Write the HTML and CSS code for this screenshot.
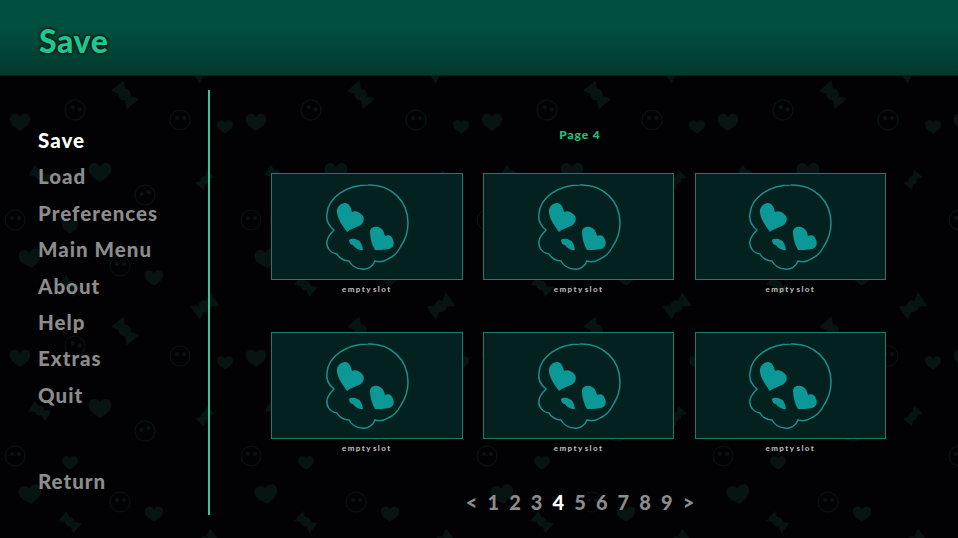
FILE: index.html
```html
<!DOCTYPE html>
<html>
<head>
    <title>Save</title>
    <link rel="stylesheet" href="styles.css">
</head>
<body>
    <svg class="defs" width="0" height="0">
        <defs>
            <symbol id="skull" viewBox="0 0 96 96">
                <path class="skull-line" d="M48 6 C71 5 88 22 88 44 C88 54 85 61 81 67 C78 73 73 78 68 80 C64 83 59 83 55 82 C53 88 47 91 42 90 C36 90 31 86 29 82 C24 82 19 79 17 75 C10 74 6 68 7 62 C8 57 11 54 14 51 C9 47 6 41 7 35 C8 18 27 6 48 6 Z"/>
                <path class="skull-fill" d="M17 34 C16 28 21 24 25 24 C29 24 31 28 32 33 C35 31 40 33 43 37 C45 41 43 45 39 47 C35 49 30 50 27 53 C23 47 18 41 17 34 Z"/>
                <path class="skull-fill" d="M50 53 C50 48 55 47 58 48 C62 49 64 52 65 57 C69 55 72 57 73 61 C75 65 73 69 69 70 C64 71 59 71 55 71 C52 66 50 59 50 53 Z"/>
                <path class="skull-fill" d="M29 61 C32 59 36 60 37 61 C40 61 42 65 43 71 C39 72 34 68 33 66 C31 66 29 64 29 61 Z"/>
            </symbol>
            <g id="heart"><path d="M0 -3 C-3 -10 -13 -7 -11 1 C-10 6 -4 9 0 12 C4 9 10 6 11 1 C13 -7 3 -10 0 -3 Z"/></g>
            <g id="candy"><path d="M-5 -4 A6 6 0 1 1 -5 4 L-12 8 L-12 -8 Z M5 -4 L12 -8 L12 8 L5 4 Z"/></g>
            <g id="face"><circle class="bg-line" r="10"/><circle cx="-3" cy="-2" r="2"/><circle cx="4" cy="-2" r="2"/></g>
            <pattern id="tile" class="tile" width="236" height="236" patternUnits="userSpaceOnUse">
                <use href="#heart" transform="translate(30 20) rotate(-10)"/>
                <use href="#candy" transform="translate(70 50) rotate(40) scale(.8)"/>
                <use href="#face" transform="translate(120 30)"/>
                <use href="#heart" transform="translate(154 40) scale(.8)"/>
                <use href="#candy" transform="translate(205 70) rotate(-35)"/>
                <use href="#heart" transform="translate(20 120) scale(.9)"/>
                <use href="#face" transform="translate(75 110) rotate(20)"/>
                <use href="#candy" transform="translate(125 95) rotate(50)"/>
                <use href="#face" transform="translate(180 120)"/>
                <use href="#heart" transform="translate(225 125) scale(.7)"/>
                <use href="#candy" transform="translate(40 175) rotate(30) scale(.8)"/>
                <use href="#heart" transform="translate(100 170)"/>
                <use href="#face" transform="translate(145 195) rotate(-15)"/>
                <use href="#candy" transform="translate(205 180) rotate(-50) scale(.7)"/>
                <use href="#face" transform="translate(15 220)"/>
                <use href="#heart" transform="translate(70 225) scale(.7)"/>
            </pattern>
        </defs>
    </svg>
    <svg class="backdrop" width="958" height="538"><rect width="958" height="538" fill="url(#tile)"/></svg>

    <header class="title-bar">
        <h1>Save</h1>
    </header>

    <div class="screen">
        <nav class="side-nav">
            <div class="nav-items">
                <a class="active">Save</a>
                <a>Load</a>
                <a>Preferences</a>
                <a>Main Menu</a>
                <a>About</a>
                <a>Help</a>
                <a>Extras</a>
                <a>Quit</a>
            </div>
            <a class="return-link">Return</a>
        </nav>

        <main class="save-area">
            <div class="page-name">Page 4</div>
            <div class="slots">
                <div class="slot"><div class="slot-pic"><svg><use href="#skull"/></svg></div><div class="slot-name">empty slot</div></div>
                <div class="slot"><div class="slot-pic"><svg><use href="#skull"/></svg></div><div class="slot-name">empty slot</div></div>
                <div class="slot"><div class="slot-pic"><svg><use href="#skull"/></svg></div><div class="slot-name">empty slot</div></div>
                <div class="slot"><div class="slot-pic"><svg><use href="#skull"/></svg></div><div class="slot-name">empty slot</div></div>
                <div class="slot"><div class="slot-pic"><svg><use href="#skull"/></svg></div><div class="slot-name">empty slot</div></div>
                <div class="slot"><div class="slot-pic"><svg><use href="#skull"/></svg></div><div class="slot-name">empty slot</div></div>
            </div>
            <div class="pager">
                <span>&lt;</span><span>1</span><span>2</span><span>3</span><span class="current">4</span><span>5</span><span>6</span><span>7</span><span>8</span><span>9</span><span>&gt;</span>
            </div>
        </main>
    </div>
</body>
</html>
```
FILE: styles.css
```css
body {
    margin: 0;
    width: 958px;
    height: 538px;
    overflow: hidden;
    position: relative;
    background-color: #020204;
    font-family: "Lato", sans-serif;
    font-weight: 900;
}

.defs {
    position: absolute;
}

.backdrop {
    position: absolute;
    left: 0;
    top: 0;
}

.tile {
    fill: #071412;
}

.bg-line {
    fill: none;
    stroke: #071412;
}

.title-bar {
    position: relative;
    height: 76px;
    background: linear-gradient(#00503f, #00503f 35%, #03392e);
    border-bottom: 1px solid #04251e;
    box-sizing: border-box;
}

.title-bar h1 {
    margin: 0;
    padding: 21px 0 0 39px;
    font-size: 32px;
    line-height: 40px;
    font-weight: 900;
    letter-spacing: 0.6px;
    color: #1fc690;
    text-shadow: 0 0 2px #03201a, 1px 1px 2px #03201a, -1px -1px 2px #03201a, 1px -1px 2px #03201a, -1px 1px 2px #03201a;
}

.screen {
    position: relative;
    display: flex;
    height: 462px;
}

.side-nav {
    width: 170px;
    margin: 14px 0 23px;
    padding: 32px 0 0 38px;
    border-right: 2px solid #3cc49a;
    display: flex;
    flex-direction: column;
    justify-content: space-between;
}

.nav-items {
    display: flex;
    flex-direction: column;
}

.side-nav a {
    font-size: 20.5px;
    line-height: 36.4px;
    color: #8c8c8c;
    letter-spacing: 1px;
}

.side-nav a.active {
    color: #fff;
}

.return-link {
    margin-bottom: 16px;
}

.save-area {
    flex: 1;
    padding-left: 61px;
}

.page-name {
    margin-top: 51px;
    width: 618px;
    text-align: center;
    font-size: 12px;
    line-height: 16px;
    color: #1fc47f;
    letter-spacing: 0.9px;
}

.slots {
    margin-top: 30px;
    display: grid;
    grid-template-columns: repeat(3, 191.6px);
    column-gap: 20.2px;
    row-gap: 37px;
    width: 616px;
}

.slot-pic {
    height: 107px;
    box-sizing: border-box;
    background-color: #03211f;
    border: 1px solid #1e7a6c;
    padding-left: 2px;
    display: flex;
    align-items: center;
    justify-content: center;
}

.slot-pic svg {
    width: 96px;
    height: 96px;
}

.skull-line {
    fill: none;
    stroke: #1a8f8a;
    stroke-width: 1.5;
}

.skull-fill {
    fill: #0c9896;
}

.slot-name {
    margin-top: 3px;
    text-align: center;
    font-size: 8px;
    line-height: 12px;
    letter-spacing: 1.4px;
    word-spacing: -2px;
    color: #b8b8b8;
}

.pager {
    margin-top: 35px;
    width: 618px;
    display: flex;
    justify-content: center;
    gap: 7.7px;
    font-size: 20px;
    line-height: 26px;
    color: #8c8c8c;
}

.pager span {
    width: 14px;
    text-align: center;
}

.pager .current {
    color: #fff;
}
```
